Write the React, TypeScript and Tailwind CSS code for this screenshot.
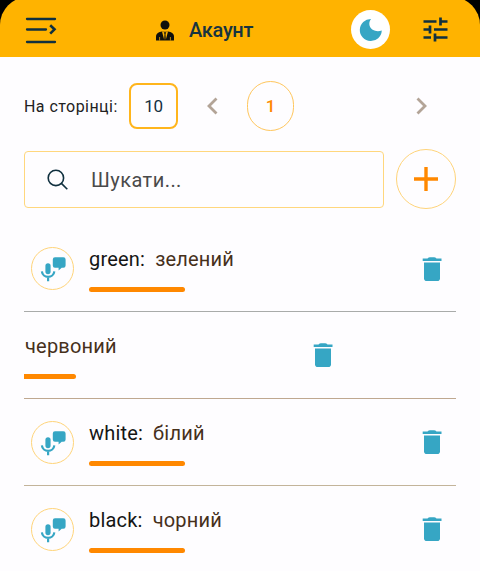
type Word = { term?: string; translation: string; line: string; swiped?: boolean };

const words: Word[] = [
  { term: 'green:', translation: 'зелений', line: 'border-[#a9abaa]' },
  { translation: 'червоний', line: 'border-[#bfa890]', swiped: true },
  { term: 'white:', translation: 'білий', line: 'border-[#c3b49a]' },
  { term: 'black:', translation: 'чорний', line: 'border-[#c3b49a]' },
];

function MenuIcon() {
  return (
    <svg width="32" height="28" viewBox="0 0 32 28" fill="none" stroke="#10303f" strokeWidth="2.3" strokeLinecap="round">
      <path d="M2 3H30M2 13.5H21M2 26H30" />
      <path d="M25.2 9.2L29.5 13.3L25.2 17.6" strokeWidth="2.6" strokeLinecap="butt" />
    </svg>
  );
}

function UserIcon() {
  return (
    <svg className="mt-px" width="20" height="21" viewBox="0 0 20 21">
      <circle cx="10" cy="5" r="4.5" fill="#10100c" />
      <path d="M1 20.5V16.5C1 13.2 3.8 12 7 11.4H13C16.2 12 19 13.2 19 16.5V20.5Z" fill="#10100c" />
      <path d="M7 11.4L9.2 19.8L9.5 14L8.7 12.3H11.3L10.5 14L10.8 19.8L13 11.4Z" fill="#ffb300" />
      <path d="M4.6 17V20.5M15.4 17V20.5" stroke="#ffb300" strokeWidth=".7" />
    </svg>
  );
}

function MicIcon() {
  return (
    <svg width="26" height="26" viewBox="0 0 26 26">
      <rect x="5.4" y="7.2" width="5.2" height="11" rx="2.6" fill="#36a6c4" />
      <path d="M1.9 15.3C2.6 22.8 13.6 22.8 14.3 15.3M8.1 20.5V25.2" fill="none" stroke="#36a6c4" strokeWidth="2.2" />
      <path d="M15 1.2H23.4Q25.6 1.2 25.6 3.4V9.5Q25.6 11.7 23.4 11.7H21.7L18.6 14.4V11.7H15Q12.8 11.7 12.8 9.5V3.4Q12.8 1.2 15 1.2Z" fill="#36a6c4" />
    </svg>
  );
}

function TrashIcon() {
  return (
    <svg width="20" height="25" viewBox="0 0 20 25" fill="#36a6c4">
      <path d="M.7 1.6H5.5Q6.5.2 8 .2H12Q13.5.2 14.5 1.6H19.5V4.1H.7Z" />
      <path d="M2 5.4H18V21.2Q18 24 15.2 24H4.8Q2 24 2 21.2Z" />
    </svg>
  );
}

function Row({ term, translation, line, swiped }: Word) {
  return (
    <li className={`group flex h-[87px] items-start border-b ${line}`}>
      {!swiped && (
        <div className="mt-[22px] ml-[7px] mr-[15px] flex size-[43px] items-center justify-center rounded-full border border-[#ffd47a]">
          <MicIcon />
        </div>
      )}
      <div className={swiped ? 'w-[289px]' : 'w-[333px]'}>
        <p className="mt-[19px] flex h-[30px] items-center gap-[10px] whitespace-nowrap text-[20px] tracking-[0.2px]">
          {term && <span className="text-[#151515]">{term}</span>}
          <span className={`text-[#46301b] ${swiped ? 'ml-px' : ''}`}>{translation}</span>
        </p>
        <div className={`mt-[13px] h-[5px] bg-[#ff8800] ${swiped ? 'w-[52px] rounded-r-full' : 'w-[96px] rounded-full'}`} />
      </div>
      <div className="mt-[31px] group-first:mt-[32px]">
        <TrashIcon />
      </div>
    </li>
  );
}

export default function App() {
  return (
    <div className="h-[571px] w-[480px] overflow-hidden bg-[#fefdff] font-['Roboto',sans-serif]">
      <div className="h-[57px] overflow-hidden bg-black">
        <header className="-mt-[3px] flex h-[60px] items-center rounded-t-[28px] bg-[#ffb300] pt-[5px] pl-[25px]">
          <MenuIcon />
          <div className="ml-[98px] flex w-[196px] items-center gap-[14px]">
            <UserIcon />
            <span className="text-[20px] font-medium tracking-[-0.3px] text-[#173440]">Акаунт</span>
          </div>
          <div className="flex size-[39px] items-center justify-center rounded-full bg-white">
            <svg width="24" height="24" viewBox="0 0 24 24">
              <path d="M12 1A11 11 0 1 0 22.8 12.6C17.5 14.2 12 12.5 10.6 7.8C9.9 5.3 10.6 2.6 12 1Z" fill="#36a6c4" />
            </svg>
          </div>
          <svg className="ml-[33px]" width="25" height="25" viewBox="0 0 25 25" fill="none" stroke="#10303f" strokeWidth="2.7">
            <path d="M.5 4.5H13.5M17.5 .5V8.5M17.5 4.5H24.5M.5 12.5H8M7 8.5V16.5M11 12.5H24.5M.5 20.5H8M12 16.5V24.5M12 20.5H24.5" />
          </svg>
        </header>
      </div>

      <main className="px-6">
        <div className="flex h-[94px] items-center pt-[4px]">
          <span className="mt-[2px] w-[105px] whitespace-nowrap text-[16px] tracking-[0.45px] text-[#222]">На сторінці:</span>
          <div className="flex h-[46px] w-[49px] items-center justify-center rounded-[8px] border-2 border-[#ffb51c] pt-[2px] text-[17px] tracking-[-0.3px] text-[#15303f]">10</div>
          <svg className="ml-[28px]" width="12" height="18" viewBox="0 0 12 18" fill="none" stroke="#b3a497" strokeWidth="2.8">
            <path d="M10.5 1.5L3 9L10.5 16.5" />
          </svg>
          <div className="ml-[29px] flex h-[50px] w-[47px] items-center justify-center rounded-full border border-[#ffc65c] pt-[2px] text-[17px] font-medium text-[#ff8800]">1</div>
          <svg className="ml-[122px]" width="12" height="18" viewBox="0 0 12 18" fill="none" stroke="#b3a497" strokeWidth="2.8">
            <path d="M1.5 1.5L9 9L1.5 16.5" />
          </svg>
        </div>

        <div className="flex h-[74px] items-start">
          <div className="flex h-[57px] w-[360px] items-center rounded-[4px] border border-[#ffd77d] pl-[22px]">
            <svg width="22" height="22" viewBox="0 0 22 22" fill="none" stroke="#10303f" strokeWidth="1.6">
              <circle cx="8.9" cy="8.9" r="7.7" />
              <path d="M14.4 14.4L20.3 20.3" />
            </svg>
            <span className="ml-[22px] text-[20px] tracking-[0.45px] text-[#4a4a4a]">Шукати...</span>
          </div>
          <div className="-mt-[2px] ml-[12px] flex size-[60px] items-center justify-center rounded-full border border-[#ffd47a]">
            <svg width="24" height="24" viewBox="0 0 24 24" stroke="#ff8800" strokeWidth="3.4">
              <path d="M0 12H24M12 0V24" />
            </svg>
          </div>
        </div>

        <ul>
          {words.map((word) => (
            <Row key={word.translation} {...word} />
          ))}
        </ul>
      </main>
    </div>
  );
}
